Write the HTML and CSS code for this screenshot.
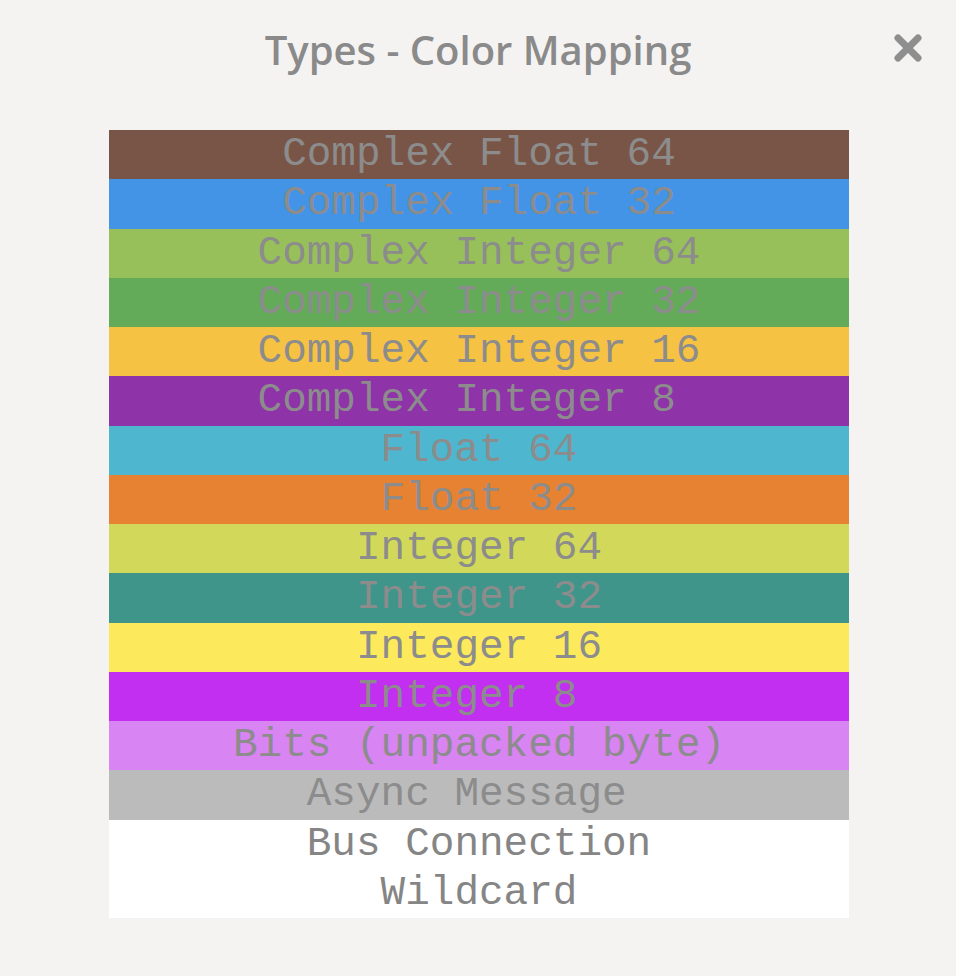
FILE: index.html
```html
<!DOCTYPE html>
<html>
<head>
<meta charset="utf-8">
<link rel="stylesheet" href="styles.css">
</head>
<body>
<div class="dialog">
  <header class="head">
    <h1 class="title">Types - Color Mapping</h1>
    <button class="close" aria-label="Close">
      <svg width="32" height="32" viewBox="0 0 32 32"><path d="M6 6 L26 26 M26 6 L6 26" stroke="#8e8e8e" stroke-width="7" stroke-linecap="round"/></svg>
    </button>
  </header>
  <div class="map">
    <div class="row c1">Complex Float 64</div>
    <div class="row c2">Complex Float 32</div>
    <div class="row c3">Complex Integer 64</div>
    <div class="row c4">Complex Integer 32</div>
    <div class="row c5">Complex Integer 16</div>
    <div class="row c6">Complex Integer 8 </div>
    <div class="row c7">Float 64</div>
    <div class="row c8">Float 32</div>
    <div class="row c9">Integer 64</div>
    <div class="row c10">Integer 32</div>
    <div class="row c11">Integer 16</div>
    <div class="row c12">Integer 8 </div>
    <div class="row c13">Bits (unpacked byte)</div>
    <div class="row c14">Async Message </div>
    <div class="row c15">Bus Connection</div>
    <div class="row c16">Wildcard</div>
  </div>
</div>
</body>
</html>
```
FILE: styles.css
```css
html, body {
  margin: 0;
  padding: 0;
  background: #f4f3f2;
}
.dialog {
  width: 956px;
  height: 976px;
  display: flex;
  flex-direction: column;
  align-items: center;
}
.head {
  position: relative;
  width: 100%;
  height: 130px;
  display: flex;
  justify-content: center;
}
.title {
  margin: 22px 0 0 0;
  font-family: "Open Sans", "Noto Sans", sans-serif;
  font-weight: 600;
  font-size: 40px;
  line-height: 56px;
  color: #8a8a8a;
  letter-spacing: 0;
}
.close {
  position: absolute;
  left: 892px;
  top: 32px;
  width: 32px;
  height: 32px;
  padding: 0;
  border: 0;
  background: none;
  display: flex;
}
.map {
  width: 740px;
  margin-left: 2px;
  display: grid;
  grid-auto-rows: 49.25px;
  background: #fff;
}
.row {
  font-family: "Liberation Mono", "Courier New", monospace;
  font-size: 41px;
  line-height: 49.25px;
  text-align: center;
  color: #8c8c8c;
  white-space: pre;
  overflow: hidden;
}
.c1 { background: #795548; }
.c2 { background: #4393e6; }
.c3 { background: #97c05a; }
.c4 { background: #63aa59; }
.c5 { background: #f6c244; }
.c6 { background: #8e33a8; }
.c7 { background: #4eb6cf; }
.c8 { background: #e68232; }
.c9 { background: #d2d95a; }
.c10 { background: #40958a; }
.c11 { background: #fde95c; }
.c12 { background: #c32ff0; }
.c13 { background: #d884f2; }
.c14 { background: #bbbbbb; }
.c15 { background: #ffffff; color: #858585; }
.c16 { background: #ffffff; color: #858585; }
```
